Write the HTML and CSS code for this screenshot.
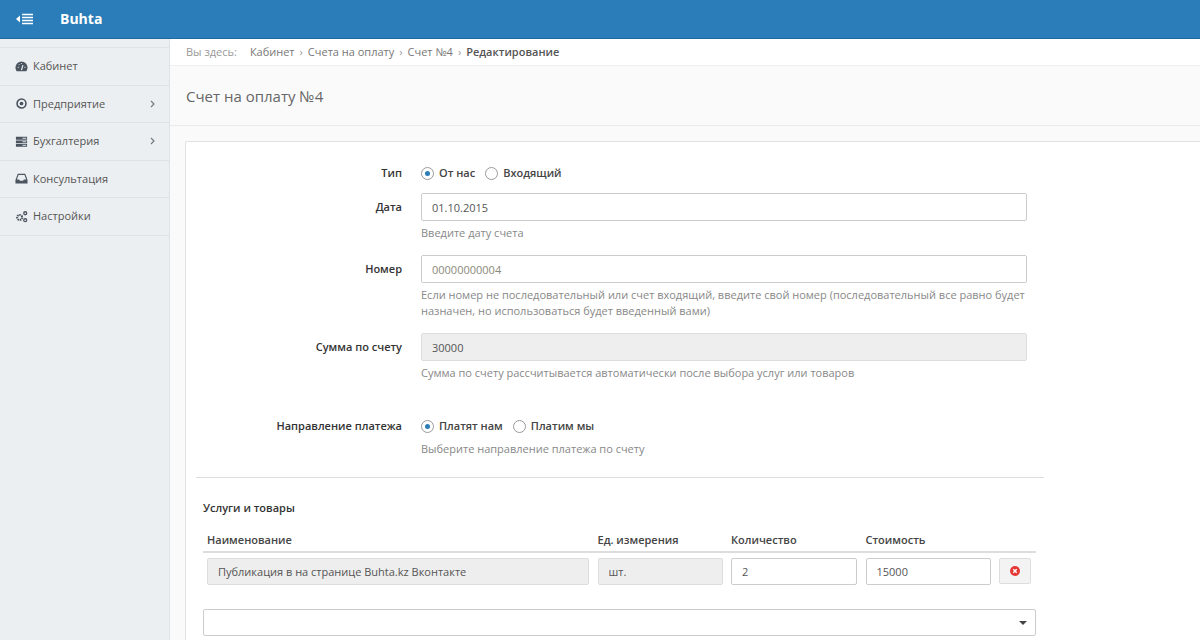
FILE: index.html
```html
<!DOCTYPE html>
<html lang="ru">
<head>
    <meta charset="UTF-8">
    <title>Счет на оплату №4</title>
    <link rel="stylesheet" href="styles.css">
</head>
<body>
    <header class="navbar">
        <svg class="nav-toggle" width="18" height="12" viewBox="0 0 18 12">
            <path d="M0 6l4-3.500v7z" fill="#fff"/>
            <path d="M6 1.500h11M6 4.500h11M6 7.500h11M6 10.500h11" stroke="#fff" stroke-width="1.600"/>
        </svg>
        <span class="brand">Buhta</span>
    </header>
    <div class="page">
        <aside class="sidebar">
            <ul class="menu">
                <li>
                    <svg class="menu-icon" viewBox="0 0 14 14"><path d="M7 1.500a6.500 6.500 0 0 0-6.500 6.500c0 1.700.6 3 1.400 4h10.200c.8-1 1.400-2.300 1.400-4A6.500 6.500 0 0 0 7 1.500z" fill="#4a5560"/><path d="M7 11l1.500-5.500M3 8h.8M10.300 8h.8M4.200 4.800l.5.5M7 3.500v.8" stroke="#eceff1" stroke-width="1.300"/></svg>
                    <span>Кабинет</span>
                </li>
                <li>
                    <svg class="menu-icon" viewBox="0 0 14 14"><circle cx="7" cy="7" r="4.800" fill="none" stroke="#4a5560" stroke-width="1.700"/><circle cx="7" cy="7" r="2" fill="#4a5560"/></svg>
                    <span>Предприятие</span>
                    <svg class="menu-arrow" width="5" height="8" viewBox="0 0 5 8"><path d="M1 1l3 3-3 3" fill="none" stroke="#6b7680" stroke-width="1.100"/></svg>
                </li>
                <li>
                    <svg class="menu-icon" viewBox="0 0 14 14"><path d="M1 2h12v3H1zM1 5.800h12v3H1zM1 9.600h12v3H1z" fill="#4a5560"/><path d="M8 3.500h4M8 7.300h4M8 11.100h4" stroke="#eceff1"/></svg>
                    <span>Бухгалтерия</span>
                    <svg class="menu-arrow" width="5" height="8" viewBox="0 0 5 8"><path d="M1 1l3 3-3 3" fill="none" stroke="#6b7680" stroke-width="1.100"/></svg>
                </li>
                <li>
                    <svg class="menu-icon" viewBox="0 0 14 14"><path d="M3 2h8l2.500 6.500V12.500H.5V8.500z" fill="#4a5560"/><path d="M3.800 3.300h6.400L12 8H9.500L8.700 9.500H5.300L4.500 8H2z" fill="#eceff1"/></svg>
                    <span>Консультация</span>
                </li>
                <li>
                    <svg class="menu-icon" viewBox="0 0 14 14"><circle cx="5" cy="8" r="2.700" fill="none" stroke="#4a5560" stroke-width="2.200" stroke-dasharray="1.600 .8"/><circle cx="11" cy="3.500" r="1.600" fill="none" stroke="#4a5560" stroke-width="1.400"/><circle cx="11" cy="11" r="1.600" fill="none" stroke="#4a5560" stroke-width="1.400"/></svg>
                    <span>Настройки</span>
                </li>
            </ul>
        </aside>
        <main class="content">
            <nav class="breadcrumb">
                <span class="crumb-label">Вы здесь:</span>
                <a>Кабинет</a><i>›</i>
                <a>Счета на оплату</a><i>›</i>
                <a>Счет №4</a><i>›</i>
                <b>Редактирование</b>
            </nav>
            <div class="page-title"><h1>Счет на оплату №4</h1></div>
            <section class="panel">
                <form class="form">
                    <div class="form-row radio-row">
                        <label class="form-label">Тип</label>
                        <div class="form-field">
                            <div class="radios">
                                <span class="radio checked"></span><span class="radio-text">От нас</span>
                                <span class="radio"></span><span class="radio-text">Входящий</span>
                            </div>
                        </div>
                    </div>
                    <div class="form-row">
                        <label class="form-label">Дата</label>
                        <div class="form-field">
                            <input class="input" value="01.10.2015">
                            <p class="hint">Введите дату счета</p>
                        </div>
                    </div>
                    <div class="form-row">
                        <label class="form-label">Номер</label>
                        <div class="form-field">
                            <input class="input" placeholder="00000000004">
                            <p class="hint">Если номер не последовательный или счет входящий, введите свой номер (последовательный все равно будет назначен, но использоваться будет введенный вами)</p>
                        </div>
                    </div>
                    <div class="form-row">
                        <label class="form-label">Сумма по счету</label>
                        <div class="form-field">
                            <input class="input" value="30000" disabled>
                            <p class="hint">Сумма по счету рассчитывается автоматически после выбора услуг или товаров</p>
                        </div>
                    </div>
                    <div class="form-row radio-row">
                        <label class="form-label">Направление платежа</label>
                        <div class="form-field">
                            <div class="radios">
                                <span class="radio checked"></span><span class="radio-text">Платят нам</span>
                                <span class="radio"></span><span class="radio-text">Платим мы</span>
                            </div>
                            <p class="hint">Выберите направление платежа по счету</p>
                        </div>
                    </div>
                    <div class="services">
                        <h6>Услуги и товары</h6>
                        <div class="table-head">
                            <span>Наименование</span>
                            <span>Ед. измерения</span>
                            <span>Количество</span>
                            <span>Стоимость</span>
                        </div>
                        <div class="table-row">
                            <input class="input" value="Публикация в на странице Buhta.kz Вконтакте" disabled>
                            <input class="input" value="шт." disabled>
                            <input class="input" value="2">
                            <input class="input" value="15000">
                            <button type="button" class="remove">
                                <svg width="10" height="10" viewBox="0 0 10 10"><circle cx="5" cy="5" r="5" fill="#e53935"/><path d="M3.300 3.300l3.400 3.400M6.700 3.300l-3.400 3.400" stroke="#fff" stroke-width="1.500"/></svg>
                            </button>
                        </div>
                        <div class="select"><span class="caret"></span></div>
                        <p class="hint">Выберите услугу или товар для добавления в счет</p>
                    </div>
                </form>
            </section>
        </main>
    </div>
</body>
</html>
```

FILE: styles.css
```css
* {
    box-sizing: border-box;
}
html, body {
    height: 100%;
    overflow: hidden;
}
body {
    margin: 0;
    font-family: "Open Sans", sans-serif;
    font-size: 11px;
    line-height: 16px;
    color: #333;
    background: #fafafa;
}
.navbar {
    display: flex;
    align-items: center;
    height: 39px;
    padding-left: 16px;
    background: #2a7db8;
    border-bottom: 1px solid #1f6a9e;
}
.nav-toggle {
    margin-right: 26px;
}
.brand {
    font-size: 14px;
    font-weight: 700;
    color: #fff;
}
.page {
    display: flex;
    height: 601px;
}
.sidebar {
    width: 170px;
    flex-shrink: 0;
    padding-top: 8px;
    background: #eceff1;
    border-right: 1px solid #e0e3e5;
}
.menu {
    margin: 0;
    padding: 0;
    list-style: none;
    border-top: 1px solid #e0e3e5;
}
.menu li {
    display: flex;
    align-items: center;
    height: 37.500px;
    padding: 0 14px 0 15px;
    color: #555;
    border-bottom: 1px solid #dfe2e4;
}
.menu-icon {
    width: 13px;
    height: 13px;
    margin-right: 5px;
}
.menu-arrow {
    margin-left: auto;
}
.content {
    flex: 1;
    min-width: 0;
}
.breadcrumb {
    display: flex;
    align-items: center;
    height: 27px;
    padding: 0 15px 0 16px;
    color: #777;
    background: #fff;
    border-bottom: 1px solid #efefef;
}
.crumb-label {
    margin-right: 13px;
    color: #999;
}
.breadcrumb i {
    margin: 0 5px;
    font-style: normal;
    color: #999;
}
.breadcrumb b {
    font-weight: 600;
    color: #555;
}
.page-title {
    height: 60px;
    padding: 20px 15px 0 16px;
    border-bottom: 1px solid #eaeaea;
}
.page-title h1 {
    margin: 0;
    font-size: 15px;
    line-height: 20px;
    font-weight: 400;
    color: #666;
}
.panel {
    height: 540px;
    margin: 15px 0 0 15px;
    padding: 0 10px;
    background: #fff;
    border: 1px solid #e2e2e2;
    border-right: 0;
    border-radius: 2px 0 0 0;
}
.form {
    width: 848px;
}
.form-row {
    display: flex;
    margin-bottom: 14px;
}
.radio-row {
    padding-top: 22px;
    margin-bottom: 11px;
}
.form-label {
    width: 206px;
    padding-top: 6px;
    font-weight: 600;
    text-align: right;
    color: #333;
}
.radio-row .form-label {
    padding-top: 1px;
}
.form-field {
    width: 606px;
    margin-left: 19px;
}
.radios {
    display: flex;
    align-items: center;
    height: 18px;
}
.radio {
    position: relative;
    width: 13px;
    height: 13px;
    margin-right: 5px;
    background: #fff;
    border: 1px solid #999;
    border-radius: 50%;
}
.radio.checked::after {
    content: "";
    position: absolute;
    left: 3px;
    top: 3px;
    width: 5px;
    height: 5px;
    background: #2a7db8;
    border-radius: 50%;
}
.radio-text {
    margin-right: 10px;
    font-weight: 600;
    color: #444;
}
.input {
    display: block;
    width: 100%;
    height: 28px;
    padding: 0 10px;
    font: inherit;
    color: #555;
    background: #fff;
    border: 1px solid #ccc;
    border-radius: 2px;
    outline: none;
}
.input::placeholder {
    color: #8a8a7a;
    opacity: 1;
}
.input:disabled {
    color: #555;
    background: #eee;
    border-color: #ddd;
}
.hint {
    margin: 4px 0 0;
    color: #888;
}
.radio-row .hint {
    margin-top: 6px;
}
.services {
    margin-top: 20px;
    padding: 22px 8px 0 7px;
    border-top: 1px solid #ddd;
}
.services h6 {
    margin: 0 0 16px;
    font-size: 11px;
    font-weight: 600;
    color: #333;
}
.table-head, .table-row {
    display: grid;
    grid-template-columns: 382px 125px 126px 125px 32px;
    column-gap: 8.500px;
    padding-left: 4px;
}
.table-head {
    height: 21px;
    font-weight: 600;
    color: #444;
    border-bottom: 2px solid #ddd;
}
.table-row {
    padding-top: 5px;
}
.table-row .input {
    height: 27px;
}
.remove {
    display: flex;
    align-items: center;
    justify-content: center;
    height: 26px;
    padding: 0;
    background: #f3f3f3;
    border: 1px solid #ddd;
    border-radius: 2px;
}
.select {
    position: relative;
    height: 27px;
    margin-top: 24px;
    background: #fff;
    border: 1px solid #ccc;
    border-radius: 2px;
}
.caret {
    position: absolute;
    right: 8px;
    top: 11px;
    border: 4px solid transparent;
    border-top-color: #444;
    border-bottom: 0;
}
```
